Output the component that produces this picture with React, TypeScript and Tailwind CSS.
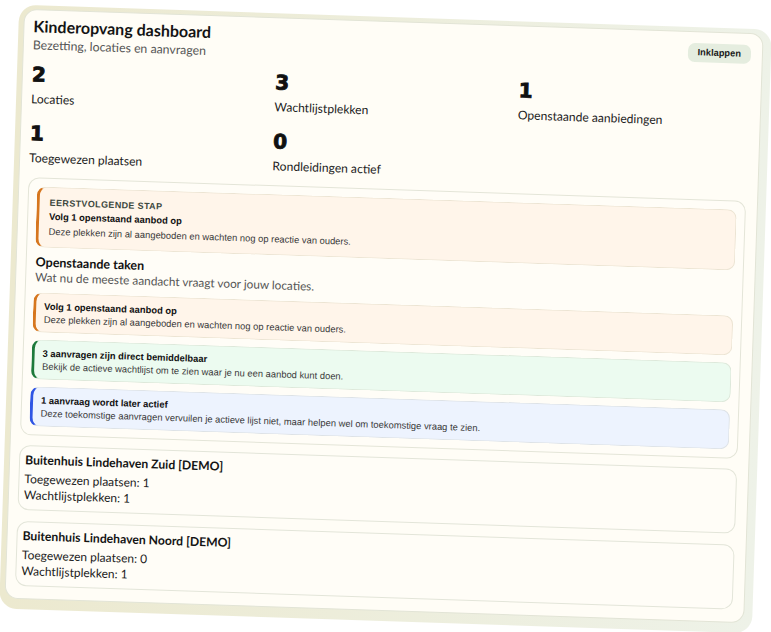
import React from "react";

const stats = [
  { n: "2", label: "Locaties" },
  { n: "3", label: "Wachtlijstplekken" },
  { n: "1", label: "Openstaande aanbiedingen" },
  { n: "1", label: "Toegewezen plaatsen" },
  { n: "0", label: "Rondleidingen actief" },
];

const tasks = [
  {
    title: "Volg 1 openstaand aanbod op",
    desc: "Deze plekken zijn al aangeboden en wachten nog op reactie van ouders.",
    box: "border-[#ece4d3] border-l-[#d6761e] bg-[#fff5ea]",
  },
  {
    title: "3 aanvragen zijn direct bemiddelbaar",
    desc: "Bekijk de actieve wachtlijst om te zien waar je nu een aanbod kunt doen.",
    box: "border-[#dde8da] border-l-[#1d7a3b] bg-[#ecfbf0]",
  },
  {
    title: "1 aanvraag wordt later actief",
    desc: "Deze toekomstige aanvragen vervuilen je actieve lijst niet, maar helpen wel om toekomstige vraag te zien.",
    box: "border-[#dde2e6] border-l-[#2f55e4] bg-[#edf3fe]",
  },
];

const locations = [
  { name: "Buitenhuis Lindehaven Zuid [DEMO]", assigned: 1, wait: 1 },
  { name: "Buitenhuis Lindehaven Noord [DEMO]", assigned: 0, wait: 1 },
];

export default function App() {
  return (
    <div className="h-screen w-full overflow-hidden bg-white flex items-center justify-center">
      <div className="translate-y-[3px] rotate-[1.9deg] rounded-[17px] bg-linear-to-r from-[#ece9cf] to-[#eef2e8] pt-[4px] pl-[5px] pr-[8px] pb-[10px]">
        <div className="w-[740px] rounded-[13px] border border-[#e2e4d6] bg-[#fffdf6] pt-[6px] pl-[9px] pr-[11px] pb-[12px] font-['Lato',sans-serif] text-[#1c1c1c]">
          <div className="flex items-start justify-between">
            <div>
              <div className="text-[16px] leading-[20px] font-bold text-[#141414]">Kinderopvang dashboard</div>
              <div className="mt-[1px] text-[12.3px] leading-[16px] text-[#555555]">Bezetting, locaties en aanvragen</div>
            </div>
            <button className="mt-[4.7px] h-[19px] rounded-[7px] bg-[#e5eddf] px-[10px] font-['Liberation_Sans',Arial,sans-serif] text-[9.3px] font-bold leading-[19px] text-[#1a1a1a]">
              Inklappen
            </button>
          </div>

          <div className="mt-[9px] grid grid-cols-3 gap-x-[12.5px] gap-y-[14px]">
            {stats.map((s, i) => (
              <div key={i}>
                <div className="font-['DejaVu_Sans',sans-serif] text-[20px] leading-[24px] font-bold text-[#111111] [-webkit-text-stroke:0.9px_#111111]">
                  {s.n}
                </div>
                <div className="mt-[5px] text-[12.1px] leading-[16px] text-[#222222]">{s.label}</div>
              </div>
            ))}
          </div>

          <div className="mt-[10.5px] flex flex-col gap-[7px] rounded-[11px] border border-[#e4e5d8] bg-[#fffdf7] p-[8px]">
            <div className="rounded-[9px] border border-l-[3px] border-[#ece4d3] border-l-[#d6761e] bg-[#fff5ea] px-[10px] py-[9px] font-['Liberation_Sans',Arial,sans-serif]">
              <div className="text-[9px] leading-[13px] font-bold tracking-[0.04em] text-[#3d483e]">EERSTVOLGENDE STAP</div>
              <div className="text-[9.4px] leading-[13px] font-bold text-[#111111]">Volg 1 openstaand aanbod op</div>
              <div className="mt-[2px] text-[9.4px] leading-[13px] text-[#3a3a3a]">
                Deze plekken zijn al aangeboden en wachten nog op reactie van ouders.
              </div>
            </div>

            <div className="pl-[1px]">
              <div className="text-[12.5px] leading-[15px] font-bold text-[#111111]">Openstaande taken</div>
              <div className="text-[11.8px] leading-[16px] text-[#555555]">Wat nu de meeste aandacht vraagt voor jouw locaties.</div>
            </div>

            {tasks.map((t, i) => (
              <div
                key={i}
                className={`rounded-[9px] border border-l-[3px] py-[6px] pl-[8px] pr-[8px] font-['Liberation_Sans',Arial,sans-serif] ${t.box}`}
              >
                <div className="text-[9.4px] leading-[13px] font-bold text-[#111111]">{t.title}</div>
                <div className="text-[9.4px] leading-[13px] text-[#3a3a3a]">{t.desc}</div>
              </div>
            ))}
          </div>

          {locations.map((l, i) => (
            <div key={i} className="mt-[10.5px] rounded-[11px] border border-[#e3e5d9] bg-[#fffdf7] px-[5px] py-[6px]">
              <div className="text-[12.2px] leading-[15px] font-bold text-[#141414]">{l.name}</div>
              <div className="mt-[4px] text-[12px] leading-[16px] text-[#222222]">Toegewezen plaatsen: {l.assigned}</div>
              <div className="text-[12px] leading-[16px] text-[#222222]">Wachtlijstplekken: {l.wait}</div>
            </div>
          ))}
        </div>
      </div>
    </div>
  );
}
